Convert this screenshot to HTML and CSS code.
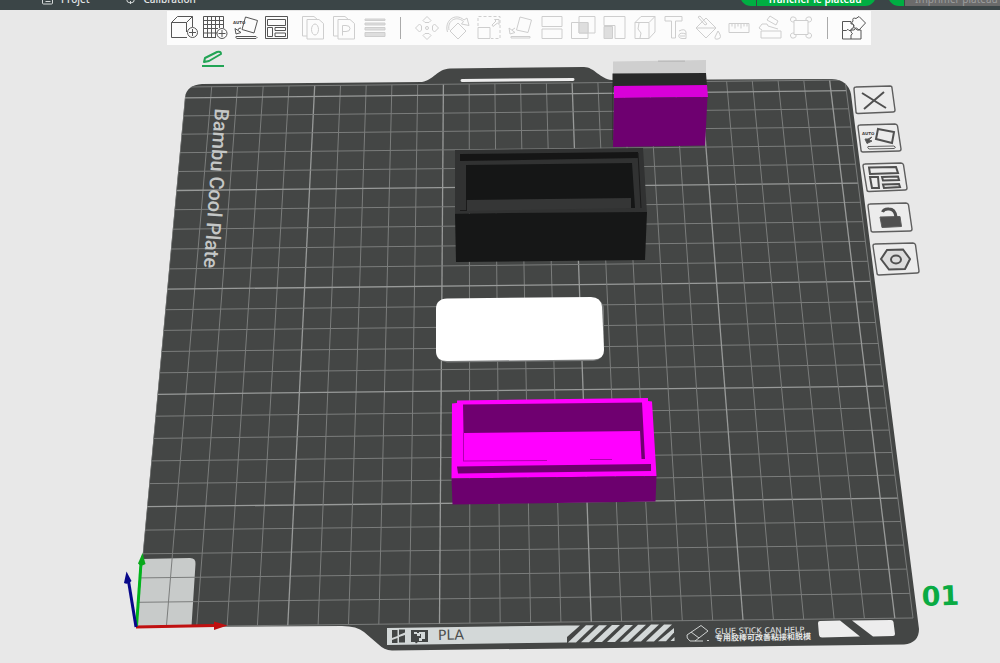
FILE: index.html
```html
<!DOCTYPE html>
<html lang="fr">
<head>
<meta charset="utf-8">
<title>Plateau</title>
<link rel="stylesheet" href="styles.css">
</head>
<body>
<header class="topbar">
  <nav class="tabs">
    <a class="tab" href="#projet"><svg class="tab-icon" viewBox="0 0 12 12"><rect x="1" y="1" width="10" height="10" rx="1"/><path d="M4 6h5M4 8.500h5"/></svg>Projet</a>
    <a class="tab" href="#calibration"><svg class="tab-icon" viewBox="0 0 12 12"><circle cx="6" cy="6" r="4"/><path d="M6 8v3"/></svg>Calibration</a>
  </nav>
  <div class="actions">
    <button class="action slice" type="button"><span class="arrow"></span><span class="action-label">Trancher le plateau</span></button>
    <button class="action print" type="button"><span class="arrow"></span><span class="action-label">Imprimer plateau</span></button>
  </div>
</header>

<main class="stage">
  <svg class="scene" viewBox="0 10 1000 653" preserveAspectRatio="xMidYMid slice" role="img" aria-label="Plateau 01">
    <defs>
      <clipPath id="plate-area"><path d="M185 97Q187 85 202 84L832 79Q848 80 851 94L919 635L136 627.500Z"/></clipPath>
    </defs>
    <path class="plate" d="M185 97Q187 85 202 84L422 82C434 80 437 69 450 68.500L584 67C594 67 600 79 612 80L832 79Q848 80 851 94L919 629Q919 643 904 644.500L392 650.500Q384 650 378 644L364 632Q357 626 342 626L136 627Z"/>
    <path class="slot" d="M462 80.500L573 79.500"/>
    <path class="corner" d="M142 559L190 558Q196 558 195.500 564L191.500 626L136 627Z"/>
    <g id="grid" class="grid" clip-path="url(#plate-area)"></g>

    <text class="plate-name" transform="translate(215 108) rotate(94)">Bambu Cool Plate</text>

    <path class="strip" d="M387 628L567 625.500V642.500L387 645Z"/>
    <g class="stripes">
      <path d="M567 625.500h13L567 637z"/>
      <path d="M586 625.300h8L576 642.500h-8z"/>
      <path d="M599 625.200h8L589 642.300h-8z"/>
      <path d="M612 625h8L602 642h-8z"/>
      <path d="M625 625h8L615 642h-8z"/>
      <path d="M638 624.800h8L628 641.800h-8z"/>
      <path d="M651 624.600h8L641 641.600h-8z"/>
      <path d="M664 624.500h8L654 641.400h-8z"/>
      <path d="M674 628v4.500L666 641.200h-8z"/>
      <path d="M674.500 637v4h-4z"/>
    </g>
    <g class="ink">
      <path d="M392 630h5.500v6l-5.500 2zM399 629.500h6v3l-6 2.500zM392 640l5.500-2v5h-5.500zM399 637l6-2v7.500h-6z"/>
      <path fill-rule="evenodd" d="M411 630h17v12h-10l-2 1.500-1-1.500h-4zM414 632v2h3v2h3v-2h1v4h-2v3h3v-2h3v-7h-6v1h-2v-1z"/>
    </g>
    <text class="material" transform="translate(438 640) rotate(-1)">PLA</text>
    <g class="eraser"><path d="M687 635L701 625.500 708 631 695 641H690Q686 638 687 635ZM691 632L699 638M695 641h8M707 640.500h2"/></g>
    <text class="hint" transform="translate(715 634) rotate(-1)">GLUE STICK CAN HELP.</text>
    <text class="hint hint-cjk" lang="zh-CN" transform="translate(715 641) rotate(-1)">专用胶棒可改善粘接和脱模</text>
    <path class="cutout" d="M820 621L840 620.500 860 636.500 822 637.500Q819.500 637.500 819 635L818 623Q818 621 820 621ZM852 620.500L891 620Q893 620 893.500 622L895 634Q895 636 893 636L873 636.500Z"/>
    <text class="plate-number" transform="translate(922 606) rotate(-2)">01</text>

    <g class="tall-box">
      <path fill="#cfcfcf" d="M613 61.500L706 60V74H613Z"/>
      <path fill="#bdbdbd" d="M658 60.500h27v1.500h-27z"/>
      <path fill="#282929" d="M612.500 73.500L706 73 707 86 613 87V140H612.500Z"/>
      <path fill="#d800d8" d="M614 86L707 85 708 97 614 98Z"/>
      <path fill="#6e0070" d="M614 98L707.500 97 705 145.500 613 147Z"/>
    </g>

    <g class="black-box">
      <path fill="#313232" d="M455 150L643 148 647 213H455Z"/>
      <path fill="#151515" d="M460 154L638 152V158L460 161Z"/>
      <path fill="#151616" d="M466 165L632 163 635 208H631V199L466 200.500Z"/>
      <path fill="#353636" d="M467 200L631 198V208L467 211Z"/>
      <path fill="none" stroke="#1b1b1b" d="M638 153L641 208M466.500 200V210M460 210.500h7"/>
      <path fill="#161717" d="M455 213.500L647 212 645 260 456 262Z"/>
    </g>

    <path fill="#777979" d="M446 300L594 299Q604 300 604 310V351Q603 360 593 361L447 362.500Q436 361 436 352V310Z"/>
    <path fill="#fff" d="M447 298.500L591 297Q601 297 602 307L604 350Q604 359 594 359.500L447 361Q436 361 436 351V309Q436 299 447 298.500Z"/>

    <g class="magenta-box">
      <path fill="#f0f" d="M452 403.500L457 403V400.500L648 398V401L652 401.500 656.500 476 451.500 478.500Z"/>
      <path fill="#6f0070" d="M463 404.500L642 402.500 645 459H641.500L640 431 463.500 433Z"/>
      <path fill="none" stroke="#b000b0" d="M463.500 433V461M463 461L547 460.500M590 459.500h22"/>
      <path fill="#6f0070" d="M457 466.500L651 464V471L458 473.500Z"/>
      <path fill="#6c006e" d="M451.500 478.500L656.500 476 655.500 501.500 452.500 504.500Z"/>
    </g>

    <g class="axes">
      <path stroke="#c01010" d="M136 627L215 625.500"/><path fill="#c01010" d="M214 621.500L227.500 625.500 214 630Z"/>
      <path stroke="#00b51c" d="M136.500 626L141 563"/><path fill="#0aa81c" d="M142.500 553L145.500 564Q141 567 138 563.500Z"/>
      <path stroke="#08088a" d="M136 627L128.500 581"/><path fill="#08088a" d="M126.500 571.500L131.500 581Q128 585 124 583Z"/>
    </g>
  </svg>

  <div class="toolbar" role="toolbar" aria-label="Outils">
    <div class="group">
      <button class="tool" type="button" aria-label="Ajouter"><svg viewBox="0 0 24 24"><path d="M15 21.500H-.5V6.500H14.500V16M-.5 6.500L5.500.500H20.500L14.500 6.500M20.500.500V11"/><circle cx="20.500" cy="16.500" r="5"/><path d="M20.500 13v7M17 16.500h7"/></svg></button>
      <button class="tool" type="button" aria-label="Ajouter un plateau"><svg viewBox="0 0 24 24"><path d="M13 21.500H.500V.500H20.500V12M4.500.500V21.500M8.500.500V21.500M12.500.500V21.500M16.500.500V12M.500 4.500H20.500M.500 8.500H20.500M.500 12.500H15M.500 17H14"/><circle cx="19" cy="17.500" r="5"/><path d="M19 14v7M15.500 17.500h7"/></svg></button>
      <button class="tool" type="button" aria-label="Orientation automatique"><svg viewBox="0 0 24 24"><path d="M11.500 1L23.500 4.500 20 17 8 13.500ZM2 20.500H22Q24 21.500 22 22.500H3Q1 21.500 2 20.500M1 12.500L2 18 7 16.500ZM4 14Q4 12 7 12"/><text class="auto" x="-1" y="8">AUTO</text></svg></button>
      <button class="tool" type="button" aria-label="Arranger"><svg viewBox="0 0 24 24"><path d="M.500.500H22.500V22.500H.500ZM2.500 3.500H20.500V9.500H2.500ZM2.500 11.500H7.500V20.500H2.500ZM10 11.500H20.500V14.500H10ZM10 17H20.500V20.500H10Z"/></svg></button>
    </div>
    <div class="group">
      <button class="tool" type="button" disabled aria-label="Objets"><svg viewBox="0 0 24 24"><path d="M6 20H1.500V.500H13L17 4M6 3.500H18L22.500 7.500V23H6Z"/><ellipse cx="14" cy="13.500" rx="3.500" ry="5.500"/></svg></button>
      <button class="tool" type="button" disabled aria-label="Pièces"><svg viewBox="0 0 24 24"><path d="M6 20H1.500V.500H13L17 4M6 3.500H18L22.500 7.500V23H6ZM10.500 19.500V9.500H14Q18 9.500 18 12.500T14 15.500H10.500"/></svg></button>
      <button class="tool" type="button" disabled aria-label="Hauteur de couche"><svg viewBox="0 0 24 24"><path class="shade" d="M2 3H22V4.500H2ZM2 7H22V9H2ZM2 11.500H22V14H2ZM2 16.500H22V20.500H2Z"/></svg></button>
    </div>
    <span class="separator"></span>
    <div class="group wide">
      <button class="tool" type="button" disabled aria-label="Déplacer"><svg viewBox="0 0 24 24"><path d="M12 .500L16 4.500 14 6.500H10L8 4.500ZM12 23.500L16 19.500 14 17.500H10L8 19.500ZM.500 12L4.500 8 6.500 10V14L4.500 16ZM23.500 12L19.500 8 17.500 10V14L19.500 16Z"/><circle cx="12" cy="12" r="1.500"/></svg></button>
      <button class="tool" type="button" disabled aria-label="Pivoter"><svg viewBox="0 0 24 24"><path d="M12 7L20 15 12 23 4 15ZM1.500 16C-2 5 9-4 18 4L21 2 23 9.500 15.500 8 17.500 5.500C10-1 1 5 3 14"/></svg></button>
      <button class="tool" type="button" disabled aria-label="Redimensionner"><svg viewBox="0 0 24 24"><path d="M1 11.500H13V22.500H1ZM15 9L19 5 17.500 3.500H22V8.500L20.500 7 16 10.500Z"/><path stroke-dasharray="3 2" d="M1 10V.500H23V22.500H14"/></svg></button>
      <button class="tool" type="button" disabled aria-label="Poser sur une face"><svg viewBox="0 0 24 24"><path d="M12 1L23.500 4 20 16.500 8.500 14ZM3 20.500H22V22H3ZM1 12L2 18 7 16.500ZM4 14L7 12"/></svg></button>
      <button class="tool" type="button" disabled aria-label="Couper"><svg viewBox="0 0 24 24"><path d="M2 .500H22V10.500H2ZM2 13H22V22.500H2Z"/></svg></button>
      <button class="tool" type="button" disabled aria-label="Booléen"><svg viewBox="0 0 24 24"><path d="M.500 6.500H17V22.500H.500ZM8 .500H24V17H8Z"/><path class="shade" d="M8 6.500H17V17H8Z"/></svg></button>
      <button class="tool" type="button" disabled aria-label="Supports"><svg viewBox="0 0 24 24"><path d="M2 9.500V.500H23V22.500H13V9.500Z"/><path class="shade" d="M2 10.500H10.500V22.500H2Z"/></svg></button>
      <button class="tool" type="button" disabled aria-label="Couture"><svg viewBox="0 0 24 24"><path d="M2 6.500H16V22.500H2ZM2 6.500L8 .500H22L16 6.500M22 .500V16L16 22.500M6 7L5 13 8 17 7 22"/></svg></button>
      <button class="tool" type="button" disabled aria-label="Texte"><svg viewBox="0 0 24 24"><path d="M1 .500H18V5H11.500V22H7.500V5H1ZM15 15Q21 12 22 16V22.500H18Q14 22 15 19T22 18M16 20H21"/></svg></button>
      <button class="tool" type="button" disabled aria-label="Peinture"><svg viewBox="0 0 24 24"><path d="M0 12L10 2 20 12 10 22ZM0 12H20M2 1L4 0 11 8 9 9ZM22 15Q27 22 22 23T20 19Z"/></svg></button>
      <button class="tool" type="button" disabled aria-label="Mesurer"><svg viewBox="0 0 24 24"><path d="M2 7.500H22V16.500H2ZM5 7.500v3M8 7.500v5M11 7.500v3M14 7.500v5M17 7.500v3M20 7.500v3"/></svg></button>
      <button class="tool" type="button" disabled aria-label="Assembler"><svg viewBox="0 0 24 24"><path d="M3 15H23V22H3ZM4 14L1 12 4 8H9L10 10 20 13M9 4L12 0 20 5 18 9Z"/></svg></button>
      <button class="tool" type="button" disabled aria-label="Boîte"><svg viewBox="0 0 24 24"><path d="M5 4.500H19V18.500H5ZM5 6Q1 6 1.500 3T5 1 7 4M19 6Q23 6 22.500 3T19 1 17 4M5 17Q1 17 1.500 20T5 22 7 19M19 17Q23 17 22.500 20T19 22 17 19"/></svg></button>
    </div>
    <span class="separator"></span>
    <div class="group">
      <button class="tool" type="button" aria-label="Vue assemblage"><svg viewBox="0 0 24 24"><path d="M.500 5.500H9V8Q12 7 11.500 10.500T9 13V14.500H7Q6 12 4.500 14.500H.500ZM.500 14.500V23H9V19Q12 18 9 16V14.500M9 23H19V14H15Q14 11 12 14H9M11 5Q10 1 14 2.500L17 .500 23.500 7 17 14 14.500 12Q11 13 12 9.500L9.500 7Z"/></svg></button>
    </div>
  </div>

  <button class="rename" type="button" aria-label="Renommer le plateau"><svg viewBox="0 0 24 18"><path d="M3 12L4 8 16 2Q20 1 20 4L8 11ZM1 16H23"/></svg></button>

  <div class="plate-tools">
    <button class="plate-tool p1" type="button" aria-label="Supprimer le plateau"><svg viewBox="850 84 48 34"><path d="M856 87L890 86Q892 86 892 88L895 110Q895 112 893 112L858 113.500Q856 113.500 856 112L854 89Q854 87 856 87Z"/><path class="bold" d="M862 93L886 108M884 92L864 109"/></svg></button>
    <button class="plate-tool p2" type="button" aria-label="Orienter le plateau"><svg viewBox="856 122 48 34"><path d="M860 125L895 124Q897 124 897.500 126L901 149Q901 151 899 151L863 152Q861 152 861 150L858 127Q858 125 860 125Z"/><path class="bold" d="M878 129L894 132 892 143 876 139Z"/><path d="M868 146.500L894 146Q897 147.500 894 148.500L869 149Q867 148 868 146.500"/><path class="solid" d="M865 139L867 143.500 872 141 869 140 872 137 868 139Z"/><text class="auto" x="862" y="135">AUTO</text></svg></button>
    <button class="plate-tool p3" type="button" aria-label="Arranger le plateau"><svg viewBox="861 161 48 34"><path d="M865 164L901 163Q903 163 903.500 165L907 188Q907 190 905 190L869 191.500Q867 191.500 867 190L863 166Q863 164 865 164Z"/><path class="bold" d="M869 167.500L896 167 898 173 870 174ZM870 177H878L879 188H872ZM882 177L898 176.500 899 180 883 180.500ZM883 184.500L899 184 900 187 884 188Z"/></svg></button>
    <button class="plate-tool p4" type="button" aria-label="Verrouiller le plateau"><svg viewBox="866 201 48 34"><path d="M870 204L906 203Q908 203 908.500 205L912 229Q912 231 910 231L873 232Q871 232 871 230L868 206Q868 204 870 204Z"/><path class="solid" d="M880 217L900 216.500 901.500 226.500 882 227.500Z"/><path class="heavy" d="M882.500 212Q884 208.500 889 209 895 209 896 217"/></svg></button>
    <button class="plate-tool p5" type="button" aria-label="Réglages du plateau"><svg viewBox="871 241 50 36"><path d="M875 244L913 243Q915 243 915.500 245L919 271Q919 273 917 273L879 275Q877 275 877 273L873 246Q873 244 875 244Z"/><path class="bold" fill="#dcdcdc" d="M881 259L887 250 903 249.500 910 259 905 269 889 269.500Z"/><ellipse class="bold" cx="896" cy="259.500" rx="5" ry="4"/></svg></button>
  </div>
</main>
<script src="grid.js"></script>
</body>
</html>
```
FILE: styles.css
```css
* { box-sizing: border-box; }

body {
  margin: 0;
  min-height: 100vh;
  display: flex;
  flex-direction: column;
  background: #e8e8e8;
  font-family: "Noto Sans", "Open Sans", sans-serif;
}

button {
  margin: 0;
  padding: 0;
  border: 0;
  background: none;
  font: inherit;
  color: inherit;
}

.topbar {
  height: 10px;
  overflow: hidden;
  display: flex;
  justify-content: space-between;
  align-items: flex-end;
  background: #3b4547;
  color: #e4e7e7;
  font-size: 10px;
  line-height: 12px;
}

.tabs {
  display: flex;
  gap: 34px;
  padding: 0 0 5px 41px;
}

.tab {
  display: flex;
  align-items: center;
  gap: 7px;
  color: inherit;
  text-decoration: none;
  font-weight: 500;
}

.tab-icon {
  width: 13px;
  height: 12px;
  fill: none;
  stroke: #d5d9d9;
}

.actions {
  display: flex;
  gap: 12px;
  padding-bottom: 4px;
}

.action {
  display: flex;
  align-items: flex-end;
  height: 22px;
  border-radius: 11px;
  overflow: hidden;
  background: #00ae42;
  white-space: nowrap;
}

.arrow {
  width: 17px;
  height: 100%;
  border-right: 1px solid #3b4547;
}

.action-label {
  flex: 1;
  height: 100%;
  padding-bottom: 1px;
  display: flex;
  align-items: flex-end;
  justify-content: center;
}

.slice { width: 136px; color: #fff; font-weight: 600; }
.slice .action-label { padding-right: 4px; }
.print { width: 112px; border-radius: 11px 0 0 11px; color: #9b9d9d; }
.print .action-label { padding-left: 10px; justify-content: flex-start; background: #6b6b6b; }

.stage {
  position: relative;
  flex: 1;
  display: grid;
  grid-template: 1fr / 1fr;
}

.scene {
  grid-area: 1 / 1;
  display: block;
  width: 100%;
  height: 100%;
  min-height: 0;
}

.plate { fill: #444645; }
.slot { stroke: #ededed; stroke-width: 3; stroke-linecap: round; }
.corner { fill: #c8cbca; }
.grid line { stroke: #7b7d7c; stroke-width: 1; }
.grid .major { stroke: #989a99; stroke-width: 1.3; }
.plate-name { font: 500 20px "Roboto", sans-serif; fill: #c4c7c6; }
.strip, .stripes { fill: #d3d8d8; }
.ink { fill: #434645; }
.material { font: 14px "DejaVu Sans", sans-serif; fill: #4b4e4d; }
.eraser { fill: none; stroke: #cfd2d1; stroke-width: 1; }
.hint { font: 500 8px "DejaVu Sans", sans-serif; fill: #e4e6e5; }
.hint-cjk { font: bold 8px "Noto Sans CJK SC", sans-serif; }
.cutout { fill: #ededed; }
.plate-number { font: bold 27px "DejaVu Sans", sans-serif; fill: #0aab43; }
.axes path { stroke-width: 3; }
.axes path[fill] { stroke: none; }

.toolbar {
  grid-area: 1 / 1;
  align-self: start;
  z-index: 1;
  width: 70.4%;
  height: 34px;
  margin: 1px 0 0 167px;
  padding: 0 2px 0 1px;
  display: flex;
  align-items: center;
  background: #fcfcfc;
}

.group { display: flex; }
.group + .group { margin-left: 5px; }
.wide { flex: 1; }
.wide .tool { flex: 1; }

.tool {
  width: 31px;
  height: 34px;
  display: flex;
  align-items: center;
  justify-content: center;
}

.tool svg {
  width: 24px;
  height: 24px;
  overflow: visible;
  fill: none;
  stroke: #555;
  stroke-width: 1;
}

.tool:disabled svg { stroke: #cecece; }
.tool .shade { fill: #dedede; }

.auto {
  font: bold 4px "DejaVu Sans", sans-serif;
  fill: #444;
  stroke: none;
}

.separator {
  width: 1px;
  height: 22px;
  margin: 0 10px;
  background: #aaa;
}

.rename {
  position: absolute;
  left: 201px;
  top: 40px;
  width: 24px;
  height: 18px;
}

.rename svg {
  display: block;
  fill: none;
  stroke: #22a455;
  stroke-width: 2;
  stroke-linejoin: round;
}

.plate-tool {
  position: absolute;
  width: 48px;
  height: 34px;
}

.plate-tool svg {
  display: block;
  fill: none;
  stroke: #5e5e5e;
  stroke-width: 1;
}

.plate-tool > svg > path:first-child { fill: #ececec; stroke-width: 1.4; }
.plate-tool .bold { stroke: #505050; stroke-width: 2; }
.plate-tool .solid { fill: #505050; }
.plate-tool .heavy { stroke: #505050; stroke-width: 3; }

.p1 { left: 850px; top: 74px; }
.p2 { left: 856px; top: 112px; }
.p3 { left: 861px; top: 151px; }
.p4 { left: 866px; top: 191px; }
.p5 { left: 871px; top: 231px; width: 50px; height: 36px; }
```
FILE: grid.js
```js
// Draws the 10 mm grid of a 256 mm plate, projected in perspective.
const CELLS = 25.6;
const FAR = 777 / 658;
const corners = {
  bl: [136, 627, 1],
  br: [913, 618, 1],
  tl: [186, 87, FAR],
  tr: [845, 80, FAR]
};

function project(u, v) {
  const weights = [
    [corners.bl, (1 - u) * (1 - v)],
    [corners.br, u * (1 - v)],
    [corners.tl, (1 - u) * v],
    [corners.tr, u * v]
  ];
  let x = 0, y = 0, w = 0;
  for (const [[cx, cy, cw], k] of weights) {
    x += cx * cw * k;
    y += cy * cw * k;
    w += cw * k;
  }
  return [x / w, y / w];
}

function addLine(from, to, major) {
  const line = document.createElementNS("http://www.w3.org/2000/svg", "line");
  line.setAttribute("x1", from[0].toFixed(1));
  line.setAttribute("y1", from[1].toFixed(1));
  line.setAttribute("x2", to[0].toFixed(1));
  line.setAttribute("y2", to[1].toFixed(1));
  if (major) line.setAttribute("class", "major");
  document.getElementById("grid").appendChild(line);
}

for (const i of [...Array(26).keys(), CELLS]) {
  const t = i / CELLS;
  const major = i % 5 === 0 && i > 0;
  addLine(project(t, 0), project(t, 1), major);
  addLine(project(0, t), project(1, t), major);
}
```
